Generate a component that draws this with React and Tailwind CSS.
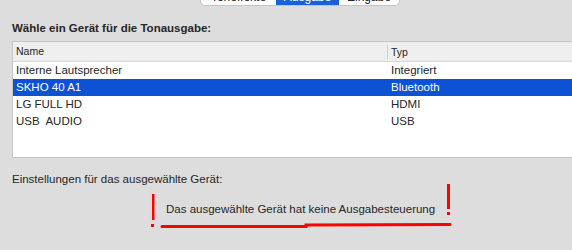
import React from "react";

const rows = [
  { name: "Interne Lautsprecher", typ: "Integriert" },
  { name: "SKHO 40 A1", typ: "Bluetooth", selected: true },
  { name: "LG FULL HD", typ: "HDMI" },
  { name: "USB  AUDIO", typ: "USB" },
];

function Segments() {
  return (
    <div className="ml-[200px] mt-[-16px] flex h-[22px] w-[200px] overflow-hidden rounded-[5px] border border-[#c4c4c4] bg-white text-[12px] leading-[25px] text-[#222]">
      <div className="w-[75px] text-center">Toneffekte</div>
      <div className="w-[63px] bg-[#1a5fdc] text-center text-white">Ausgabe</div>
      <div className="flex-1 text-center">Eingabe</div>
    </div>
  );
}

export default function App() {
  return (
    <div
      className="relative h-[250px] w-[572px] overflow-hidden bg-[#dddddd] text-[#262626]"
      style={{ fontFamily: '"Liberation Sans", Arial, sans-serif' }}
    >
      <Segments />

      <div className="ml-[12px] mt-[14px] h-[16px] text-[11.5px] font-bold leading-[16px]">
        Wähle ein Gerät für die Tonausgabe:
      </div>

      {/* device list */}
      <div className="ml-[12px] mt-[5px] h-[117px] w-[580px] border border-[#c6c6c6] bg-white">
        <div className="flex h-[20px] items-center border-b border-[#d6d6d6] bg-[#efefef] text-[10.5px]">
          <div className="w-[374px] pl-[3px]">Name</div>
          <div className="h-[14px] border-l border-[#d0d0d0] pl-[3px] leading-[14px]">Typ</div>
        </div>
        {rows.map((r, i) => (
          <div
            key={i}
            className={
              r.selected
                ? "flex h-[17px] items-center bg-[#0d52d4] text-[11.5px] text-white"
                : "flex h-[17px] items-center text-[11.5px]"
            }
          >
            <div className="w-[375px] whitespace-pre pl-[3px]">{r.name}</div>
            <div className="pl-[3px]">{r.typ}</div>
          </div>
        ))}
      </div>

      <div className="ml-[12px] mt-[13px] h-[16px] text-[11.5px] leading-[16px]">
        Einstellungen für das ausgewählte Gerät:
      </div>

      <div className="ml-[166px] mt-[14px] h-[16px] text-[11.5px] leading-[16px]">
        Das ausgewählte Gerät hat keine Ausgabesteuerung
      </div>

      {/* red annotation */}
      <svg className="absolute left-0 top-0" width="572" height="250">
        <rect x="152" y="194" width="2.5" height="26" fill="#ff0000" />
        <rect x="151" y="224" width="3" height="3" fill="#ff0000" />
        <rect x="447" y="184" width="3" height="25" fill="#ff0000" />
        <rect x="447" y="212" width="3" height="3" fill="#ff0000" />
        <path d="M162 226.5 L306 226.5 L306 225 L450 224.5" stroke="#ff0000" strokeWidth="3" fill="none" strokeLinecap="round" />
      </svg>
    </div>
  );
}
